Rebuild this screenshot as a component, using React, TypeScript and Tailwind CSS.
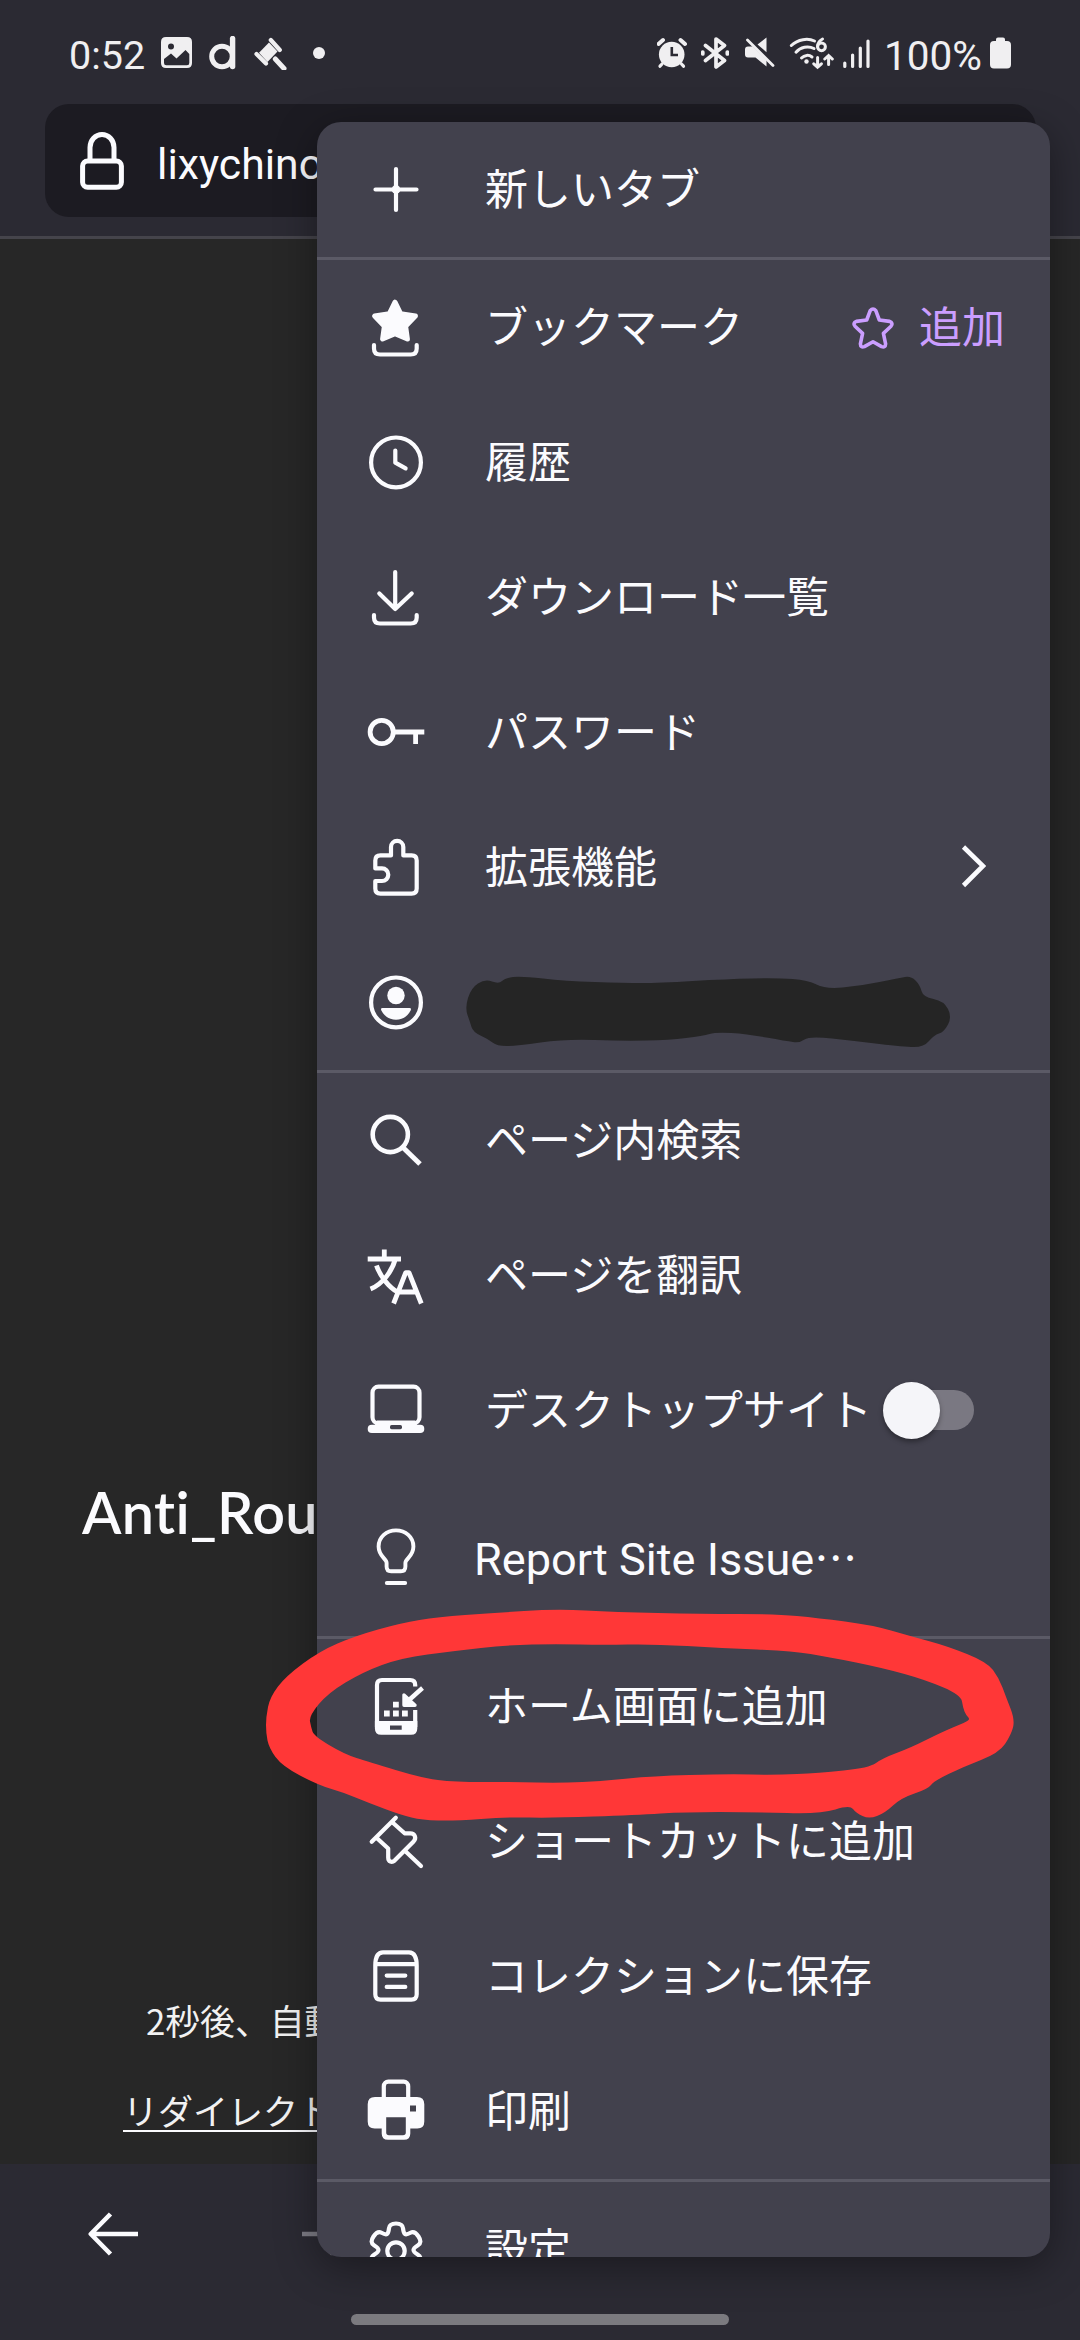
import React from "react";

const JP = "font-['Noto_Sans_CJK_JP',sans-serif]";

type Point = [number, number];

/* Closed outline that runs through the midpoints of the given corners. */
function smooth(points: Point[]): string {
  const n = points.length;
  const mid = (a: Point, b: Point): Point => [(a[0] + b[0]) / 2, (a[1] + b[1]) / 2];
  const start = mid(points[n - 1], points[0]);
  let d = `M${start[0]} ${start[1]}`;
  points.forEach((p, i) => {
    const m = mid(p, points[(i + 1) % n]);
    d += `Q${p[0]} ${p[1]} ${m[0]} ${m[1]}`;
  });
  return d + "Z";
}

const SCRIBBLE: Point[] = [
  [471, 988], [485, 979], [499, 984], [505, 978], [521, 976], [565, 981], [624, 983], [659, 983],
  [727, 979], [777, 978], [808, 980], [825, 989], [860, 986], [899, 978], [911, 976], [920, 985],
  [923, 997], [944, 1001], [952, 1017], [944, 1032], [934, 1035], [924, 1047], [904, 1047],
  [855, 1041], [809, 1036], [800, 1043], [786, 1041], [747, 1034], [716, 1032], [703, 1036],
  [669, 1040], [624, 1041], [565, 1039], [516, 1046], [497, 1046], [488, 1039], [473, 1032],
  [470, 1022], [465, 1008],
];

const RING_OUTER: Point[] = [
  [266, 1717], [270, 1697], [286, 1676], [320, 1651], [355, 1636], [401, 1623], [438, 1617],
  [492, 1613], [556, 1609], [615, 1612], [701, 1614], [776, 1614], [818, 1618], [872, 1625],
  [910, 1636], [947, 1646], [987, 1662], [999, 1678], [1006, 1697], [1015, 1720], [1011, 1735],
  [999, 1753], [963, 1767], [934, 1781], [928, 1789], [901, 1798], [885, 1813], [869, 1819],
  [856, 1813], [850, 1805], [821, 1814], [754, 1812], [685, 1812], [636, 1815], [551, 1818],
  [508, 1817], [454, 1821], [422, 1820], [401, 1815], [369, 1803], [342, 1792], [318, 1785],
  [282, 1766], [269, 1748], [266, 1733],
];

const RING_INNER: Point[] = [
  [309, 1716], [328, 1693], [363, 1672], [401, 1658], [454, 1651], [508, 1645], [556, 1644],
  [604, 1645], [652, 1644], [722, 1648], [792, 1651], [829, 1657], [883, 1668], [926, 1680],
  [961, 1695], [963, 1708], [966, 1715], [970, 1719], [966, 1722], [942, 1732], [910, 1748],
  [883, 1758], [869, 1768], [818, 1773], [776, 1775], [727, 1774], [652, 1776], [604, 1781],
  [561, 1783], [513, 1782], [454, 1782], [422, 1778], [369, 1762], [344, 1754], [314, 1736],
  [311, 1727],
];

const GEAR: Point[] = [
  [-6.5, -26.5], [6.5, -26.5], [7.5, -17], [10.5, -15], [18.5, -19.5], [26.5, -7.5], [17.5, -2],
  [17.5, 2], [26.5, 7.5], [18.5, 19.5], [10.5, 15], [7.5, 17], [6.5, 26.5], [-6.5, 26.5],
  [-7.5, 17], [-10.5, 15], [-18.5, 19.5], [-26.5, 7.5], [-17.5, 2], [-17.5, -2], [-26.5, -7.5],
  [-18.5, -19.5], [-10.5, -15], [-7.5, -17],
];

function Icon({ children }: { children: React.ReactNode }) {
  return (
    <svg
      className="h-[68px] w-[68px] shrink-0"
      viewBox="-34 -34 68 68"
      fill="none"
      stroke="currentColor"
      strokeWidth="4.2"
      strokeLinecap="round"
      strokeLinejoin="round"
    >
      {children}
    </svg>
  );
}

const icons = {
  plus: (
    <Icon>
      <path d="M-20.5 -.5H20.5M0 -21V20" />
      <circle cx="0" cy="-.5" r="4.4" fill="currentColor" stroke="none" />
    </Icon>
  ),
  bookmark: (
    <Icon>
      <path
        d="M-1 -25.8L4.6 -14.4L19.4 -12L9.6 -1.8L11.4 11L-1 5.6L-13.4 11L-11.6 -1.8L-21.4 -12L-6.6 -14.4Z"
        fill="currentColor"
        strokeWidth="5"
      />
      <path d="M-22 17V20.5Q-22 26.5 -16 26.5H14.7Q20.7 26.5 20.7 20.5V17" />
    </Icon>
  ),
  history: (
    <Icon>
      <circle cx="0" cy="-.6" r="24.9" />
      <path d="M-.7 -12.5V-.3L9.6 5.4" />
    </Icon>
  ),
  download: (
    <Icon>
      <path d="M-.8 -26V11M-16.7 -4.5L-.8 11L15.7 -4.5" />
      <path d="M-22 17V19.5Q-22 25.5 -16 25.5H14.7Q20.7 25.5 20.7 19.5V17" />
    </Icon>
  ),
  key: (
    <Icon>
      <circle cx="-14.3" cy="-1" r="11.6" strokeWidth="4.8" />
      <path d="M-2 -1H28.3M19.6 -1V11" strokeWidth="4.8" strokeLinecap="butt" />
    </Icon>
  ),
  puzzle: (
    <Icon>
      <path d="M-20.7 -7.5Q-20.7 -12.6 -15.6 -12.6H-5V-21A6.15 6.15 0 0 1 7.3 -21V-12.6H15.6Q20.7 -12.6 20.7 -7.5V20.6Q20.7 25.7 15.6 25.7H-15.6Q-20.7 25.7 -20.7 20.6V13H-14A6.3 6.3 0 0 0 -14 .4H-20.7Z" />
    </Icon>
  ),
  account: (
    <Icon>
      <circle cx="0" cy="-.6" r="24.9" />
      <circle cx="0" cy="-7.5" r="8.7" fill="currentColor" stroke="none" />
      <path
        d="M-13.5 5H13.5Q15.8 5 14.6 7.5C11.5 13.5 6 16.8 0 16.8S-11.5 13.5 -14.6 7.5Q-15.8 5 -13.5 5Z"
        fill="currentColor"
        stroke="none"
      />
    </Icon>
  ),
  search: (
    <Icon>
      <circle cx="-5.7" cy="-6.5" r="17.6" strokeWidth="4.6" />
      <path d="M7.5 7L24 23" strokeWidth="5" strokeLinecap="butt" />
    </Icon>
  ),
  translate: (
    <Icon>
      <path
        d="M-11.7 -26.5V-17M-28.3 -17H5M-.6 -17C-4 -5 -13 8 -25.5 13M-19.5 -10.5C-16 0 -7 11.5 1.5 16"
        strokeWidth="4.8"
        strokeLinecap="butt"
      />
      <path d="M-2.4 27.5L9.7 -3.3H13L25.3 27.5M3 16H20" strokeWidth="4.8" strokeLinecap="butt" />
    </Icon>
  ),
  laptop: (
    <Icon>
      <rect x="-23.5" y="-24.3" width="47" height="36.5" rx="6" />
      <path
        d="M-19 9.5H19L21 13.8H24.2A4.1 4.1 0 0 1 24.2 22H-24.2A4.1 4.1 0 0 1 -24.2 13.8H-21Z"
        fill="currentColor"
        stroke="none"
      />
      <rect x="-6" y="14" width="12" height="4.2" rx="1.6" fill="#42414d" stroke="none" />
    </Icon>
  ),
  bulb: (
    <Icon>
      <path
        d="M-9.4 9.5V6C-9.4 1.5 -17.4 -.5 -17.4 -10.5C-17.4 -20 -9.5 -26.6 0 -26.6S17.4 -20 17.4 -10.5C17.4 -.5 9.4 1.5 9.4 6V9.5Q9.4 14.3 4.8 14.3H-4.8Q-9.4 14.3 -9.4 9.5Z"
        strokeWidth="3.9"
      />
      <path d="M-9.2 26H9.2" strokeWidth="3.9" />
    </Icon>
  ),
  home: (
    <Icon>
      <path d="M19.2 -20.5V-22Q19.2 -27 14.2 -27H-14Q-19 -27 -19 -22V20M19.2 3V20" strokeLinecap="butt" />
      <path
        d="M-21.1 14H21.3V21.5Q21.3 27.8 15 27.8H-14.8Q-21.1 27.8 -21.1 21.5ZM-6 18.5V22.7H5.7V18.5Z"
        fill="currentColor"
        fillRule="evenodd"
        stroke="none"
      />
      <path
        d="M-12 3.6H-6.3V9.4H-12ZM-3 3.6H2.8V9.4H-3ZM6 3.6H11.8V9.4H6ZM-3 -5.3H2.8V.5H-3Z"
        fill="currentColor"
        stroke="none"
      />
      <path d="M8 -12L8 -1.8L19 -1.8Z" fill="currentColor" strokeWidth="3.4" />
      <path d="M12.5 -6.5L26.5 -19" strokeWidth="4.4" strokeLinecap="butt" />
    </Icon>
  ),
  pin: (
    <Icon>
      <path d="M-24.3 -.2L-.2 -24.2M-19.8 -4.5L-7.8 6.5V15.5C-7.8 20 -4 20.8 -1.4 18.6L17.6 -.5C20.8 -4.2 18.8 -8.7 14.3 -8.7H8.6L-4 -20M8.6 8.4L25 24" />
    </Icon>
  ),
  collection: (
    <Icon>
      <path d="M-20.7 -11.5C-20.7 -19.5 -18.5 -24.6 -13 -24.6H13C18.5 -24.6 20.7 -19.5 20.7 -11.5V17.3Q20.7 22.6 15.4 22.6H-15.4Q-20.7 22.6 -20.7 17.3Z" />
      <path d="M-20 -12.8H20" strokeLinecap="butt" />
      <path d="M-9.3 -1.4H9.3M-9.3 9.9H9.3" />
    </Icon>
  ),
  print: (
    <Icon>
      <rect x="-12.2" y="-30.3" width="24.4" height="22" rx="4.5" />
      <path
        d="M-21 -15H21Q28.3 -15 28.3 -7.7V9.6Q28.3 16.6 21.3 16.6H14.3V21.5Q14.3 27.8 8 27.8H-8Q-14.3 27.8 -14.3 21.5V16.6H-21.3Q-28.3 16.6 -28.3 9.6V-7.7Q-28.3 -15 -21 -15ZM-9.8 5.2V20.5Q-9.8 23.3 -7 23.3H7Q9.8 23.3 9.8 20.5V5.2ZM14 -6.4V-.5H20V-6.4Z"
        fill="currentColor"
        fillRule="evenodd"
        stroke="none"
      />
    </Icon>
  ),
  settings: (
    <Icon>
      <path d={smooth(GEAR)} />
      <circle cx="0" cy="1" r="8.7" />
    </Icon>
  ),
};

function Row({ icon, label, children }: { icon: React.ReactNode; label?: string; children?: React.ReactNode }) {
  return (
    <li className="flex h-[135px] shrink-0 items-center pl-[45px]">
      {icon}
      {label && (
        <span className={`${JP} mb-[6px] ml-[55px] whitespace-nowrap text-[43px] leading-none`}>{label}</span>
      )}
      {children}
    </li>
  );
}

function Section({ children, last }: { children: React.ReactNode; last?: boolean }) {
  return (
    <ul className={last ? "flex shrink-0 flex-col" : "flex shrink-0 flex-col border-b-[3px] border-[#5b5a66]"}>
      {children}
    </ul>
  );
}

function StatusBar() {
  return (
    <div className="flex h-[104px] items-center pl-[69px] pr-[68px] pt-[2px] font-['Roboto',sans-serif] text-[39.5px] leading-none text-[#f0eff1]">
      <span className="mt-[6px] w-[92px]">0:52</span>
      <svg className="h-[32px] w-[31px]" viewBox="161 38 31 32">
        <path
          fillRule="evenodd"
          fill="currentColor"
          d="M166 38H187Q192 38 192 43V64Q192 69 187 69H166Q161 69 161 64V43Q161 38 166 38ZM164 60V64Q164 66.3 166.3 66.3H187Q189.3 66.3 189.3 64V55L185.5 51L176.5 59.5L171 54.5ZM171 44.5A3 3 0 1 0 171 50.5A3 3 0 0 0 171 44.5Z"
        />
      </svg>
      <svg className="ml-[17px] h-[34px] w-[27px]" viewBox="209 36 27 34" fill="none" stroke="currentColor">
        <circle cx="222" cy="56.5" r="10.3" strokeWidth="5" />
        <path d="M232.6 38.5V66.5" strokeWidth="5.4" strokeLinecap="round" />
      </svg>
      <svg className="ml-[18px] h-[33px] w-[33px]" viewBox="254 37 33 33" fill="none" stroke="currentColor">
        <path d="M270.8 40L279.8 50M256.5 54L266 63.5" strokeWidth="4.2" strokeLinecap="round" />
        <path d="M269 42.5L277.5 51.5L267.5 62L259 52.8Z" fill="currentColor" stroke="none" />
        <path d="M275.3 59L284 68.5" strokeWidth="5" strokeLinecap="round" />
      </svg>
      <span className="ml-[26px] h-[12px] w-[12px] rounded-full bg-[#f0eff1]" />

      <div className="ml-auto flex items-center">
        <svg className="h-[32px] w-[30px]" viewBox="658 37 30 32" fill="none" stroke="currentColor">
          <circle cx="672.7" cy="54.5" r="12.8" fill="currentColor" stroke="none" />
          <path d="M659.5 44L664 40M686 44L681.5 40" strokeWidth="4" strokeLinecap="round" />
          <path d="M663 64L661 66.2M682.5 64L684.5 66.2" strokeWidth="3.2" strokeLinecap="round" />
          <path d="M672.8 47V55H679" stroke="#2b2a33" strokeWidth="2.6" />
        </svg>
        <svg
          className="ml-[14px] h-[34px] w-[28px]"
          viewBox="702 36 28 34"
          fill="none"
          stroke="currentColor"
          strokeWidth="3.7"
          strokeLinejoin="round"
          strokeLinecap="round"
        >
          <path d="M706.5 45.5L725.5 60.5L717 67V39L725.5 45.5L706.5 60.5M703.8 52V54M728.3 52V54" />
        </svg>
        <svg className="ml-[15px] h-[32px] w-[31px]" viewBox="744 38 31 32" fill="none" stroke="currentColor">
          <path
            d="M748 47.5H752.5L766.5 61V67.5L755.5 58.6H748Q745 58.6 745 55.6V50.5Q745 47.5 748 47.5ZM757.5 45.5L766.5 38.5V53.2Z"
            fill="currentColor"
            stroke="none"
          />
          <path d="M747.5 41L773 66.5" strokeWidth="2.8" strokeLinecap="round" />
        </svg>
        <svg
          className="ml-[14px] h-[34px] w-[45px]"
          viewBox="789 36 45 34"
          fill="none"
          stroke="currentColor"
          strokeWidth="3"
          strokeLinecap="round"
        >
          <path d="M791.3 45.5C798 39 808 38 814.5 41M796 52.2C800.5 47 808 45.5 814 48.5M801.5 58C804.5 54.8 809 54.6 812 57" />
          <circle cx="806.5" cy="61.5" r="2.2" fill="currentColor" stroke="none" />
          <circle cx="821.5" cy="46.8" r="3.9" />
          <path d="M822.5 39C819.5 40.5 817.6 43.5 817.6 46.5" />
          <path d="M817.6 57.5V67M813.8 63.8L817.6 67.2L821.4 63.8M828.6 64.5V55.5M824.8 59L828.6 55.5L832.3 59" />
        </svg>
        <svg
          className="ml-[9px] h-[31px] w-[28px]"
          viewBox="843 37 28 31"
          stroke="currentColor"
          strokeWidth="3.2"
          strokeLinecap="round"
        >
          <path d="M844.8 62V65.5M852.6 54V65.5M860.3 47V65.5M868 40V65.5" />
        </svg>
        <span className="ml-[13px] mt-[6px] w-[106px] text-[40.5px]">100%</span>
        <svg className="h-[32px] w-[22px]" viewBox="990 37 22 32" fill="currentColor">
          <path d="M996 39.5Q996 37.5 998 37.5H1003Q1005 37.5 1005 39.5V41H1007Q1011 41 1011 45V64.5Q1011 68.5 1007 68.5H994Q990 68.5 990 64.5V45Q990 41 994 41H996Z" />
        </svg>
      </div>
    </div>
  );
}

export default function App() {
  return (
    <div lang="ja" className="relative flex h-[2340px] w-[1080px] flex-col overflow-hidden bg-[#272727] text-[#fbfbfe]">
      <header className="flex h-[239px] shrink-0 flex-col border-b-[3px] border-[#45444b] bg-[#2b2a33]">
        <StatusBar />
        <div className="ml-[45px] flex h-[113px] w-[991px] items-center rounded-[24px] bg-[#1c1b22] pl-[35px]">
          <svg className="h-[58px] w-[44px]" viewBox="0 0 44 58" fill="none" stroke="currentColor" strokeWidth="5">
            <rect x="2.6" y="29" width="38.8" height="26.3" rx="5" />
            <path d="M10 29V15.5A12 13 0 0 1 34 15.5V29" />
          </svg>
          <span className="ml-[33px] mt-[7px] font-['Roboto',sans-serif] text-[42.7px] leading-none">lixychino</span>
        </div>
      </header>

      <main className="flex flex-1 flex-col whitespace-nowrap">
        <h1 className="mt-[1241px] pl-[82px] font-['Lato',sans-serif] text-[57.5px] font-semibold leading-[64px] tracking-[0.4px] [font-variant-ligatures:none]">
          Anti_Rou
        </h1>
        <p className={`${JP} mt-[456px] pl-[146px] text-[34.8px] leading-[40px] text-[#f2f2f2]`}>2秒後、自動</p>
        <p className={`${JP} mt-[50px] pl-[123px] text-[35px] leading-[40px] text-[#f2f2f2]`}>
          <span className="inline-block h-[42px] border-b-2 border-[#fbfbfe] leading-[40px]">リダイレクト</span>
        </p>
      </main>

      <footer className="flex h-[176px] shrink-0 flex-col bg-[#2b2a33]">
        <div className="flex h-[139px] items-center pl-[88px]">
          <svg className="h-[44px] w-[50px]" viewBox="0 0 50 44" fill="none" stroke="currentColor" strokeWidth="4.6">
            <path d="M50 22H4M22.5 2L2.8 22L22.5 42" strokeLinejoin="round" />
          </svg>
          <svg className="ml-[164px] h-[44px] w-[50px] text-[#7d7c85]" viewBox="0 0 50 44" fill="none" stroke="currentColor" strokeWidth="4.6">
            <path d="M0 22H46M27.5 2L47.2 22L27.5 42" />
          </svg>
        </div>
        <div className="ml-[351px] mt-[11px] h-[11px] w-[378px] rounded-full bg-[#7b7a7f]" />
      </footer>

      <nav className="absolute left-[317px] top-[122px] flex h-[2135px] w-[733px] flex-col overflow-hidden rounded-[24px] bg-[#42414d] shadow-[0_10px_40px_rgba(0,0,0,0.38)]">
        <Section>
          <Row icon={icons.plus} label="新しいタブ" />
        </Section>
        <Section>
          <Row icon={icons.bookmark} label="ブックマーク">
            <div className="ml-auto flex items-center pr-[45px] text-[#cb9eff]">
              <svg
                className="mr-[23px] h-[46px] w-[46px]"
                viewBox="-23 -23 46 46"
                fill="none"
                stroke="currentColor"
                strokeWidth="3.6"
                strokeLinejoin="round"
              >
                <path d="M-2.8 -17.3Q0 -20.8 2.8 -17.3L6.3 -8L16.6 -6.6Q20.6 -5 18 -1.8L10.4 5.4L12.6 15.8Q12.4 20 8.6 18.6L0 13.8L-8.6 18.6Q-12.4 20 -12.6 15.8L-10.4 5.4L-18 -1.8Q-20.6 -5 -16.6 -6.6L-6.3 -8Z" />
              </svg>
              <span className={`${JP} mb-[6px] text-[43px] leading-none`}>追加</span>
            </div>
          </Row>
          <Row icon={icons.history} label="履歴" />
          <Row icon={icons.download} label="ダウンロード一覧" />
          <Row icon={icons.key} label="パスワード" />
          <Row icon={icons.puzzle} label="拡張機能">
            <svg className="mb-[2px] ml-auto mr-[64px] h-[44px] w-[25px]" viewBox="0 0 25 44" fill="none" stroke="currentColor" strokeWidth="4.6">
              <path d="M2.5 2L22 21L2.5 40.5" />
            </svg>
          </Row>
          <Row icon={icons.account} />
        </Section>
        <Section>
          <Row icon={icons.search} label="ページ内検索" />
          <Row icon={icons.translate} label="ページを翻訳" />
          <Row icon={icons.laptop} label="デスクトップサイト">
            <div className="mb-[1px] ml-auto mr-[76px] flex h-[40px] w-[91px] shrink-0 items-center rounded-full bg-gradient-to-r from-transparent from-30% to-[#7a7882] to-30%">
              <span className="h-[57px] w-[57px] rounded-full bg-[#f5f5f9] shadow-[0_3px_5px_rgba(0,0,0,0.35)]" />
            </div>
          </Row>
          <li className="flex h-[158px] shrink-0 items-center pl-[45px]">
            {icons.bulb}
            <span className="ml-[44px] mt-[4px] whitespace-nowrap font-['Roboto',sans-serif] text-[45.1px] leading-none">
              Report Site Issue<span className={`${JP} text-[43px] leading-none`}>…</span>
            </span>
          </li>
        </Section>
        <Section>
          <Row icon={icons.home} label="ホーム画面に追加" />
          <Row icon={icons.pin} label="ショートカットに追加" />
          <Row icon={icons.collection} label="コレクションに保存" />
          <Row icon={icons.print} label="印刷" />
        </Section>
        <Section last>
          <Row icon={icons.settings} label="設定" />
        </Section>
      </nav>

      {/* Freehand marks over the menu */}
      <svg className="pointer-events-none absolute inset-0 h-[2340px] w-[1080px]" viewBox="0 0 1080 2340">
        <path d={smooth(SCRIBBLE)} fill="#252525" />
        <path d={smooth(RING_OUTER) + smooth(RING_INNER)} fill="#ff3737" fillRule="evenodd" />
      </svg>
    </div>
  );
}
